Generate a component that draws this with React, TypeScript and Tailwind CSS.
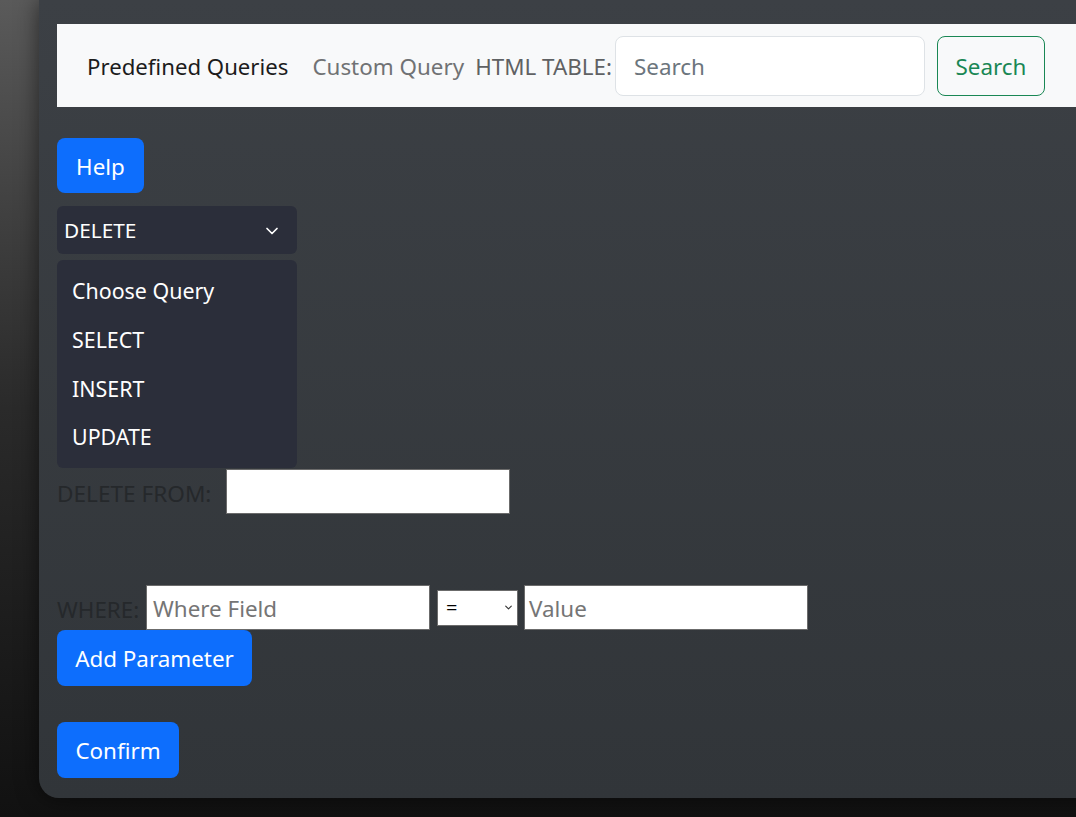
import React from "react";

const font = { fontFamily: '"Noto Sans", "Open Sans", sans-serif' };

function Chevron({ className, sw = 2 }: { className?: string; sw?: number }) {
  return (
    <svg viewBox="0 0 16 16" className={className} fill="none" stroke="currentColor" strokeWidth={sw} strokeLinecap="round" strokeLinejoin="round">
      <path d="M3 5.5l5 5 5-5" />
    </svg>
  );
}

export default function App() {
  return (
    <div
      className="w-[1076px] h-[817px] overflow-hidden bg-gradient-to-b from-[#5a5a5a] via-[#2a2a2a] to-[#111111]"
      style={font}
    >
      <div className="ml-[39px] w-[1100px] h-[798px] rounded-bl-[20px] bg-gradient-to-b from-[#3c4045] to-[#313539] shadow-[0_0_22px_rgba(0,0,0,0.55)] pl-[18px] pt-[24px]">
        {/* Navbar */}
        <div className="h-[83px] bg-[#f8f9fa] flex items-center pl-[30px]">
          <span className="text-[22.2px] text-[#1c1c1c] pt-[3px]">Predefined Queries</span>
          <span className="ml-[24px] text-[22.4px] text-[#707274] pt-[3px]">Custom Query</span>
          <span className="ml-[11px] text-[22.4px] text-[#5f6163] pt-[3px]">HTML TABLE:</span>
          <div className="ml-[3px] w-[310px] h-[60px] bg-white border border-[#dee2e6] rounded-[8px] flex items-center pl-[18px] pt-[3px] text-[22.4px] text-[#6c757d]">
            Search
          </div>
          <div className="ml-[12px] w-[108px] h-[60px] border border-[#198754] rounded-[8px] flex items-center justify-center pt-[3px] text-[22.4px] text-[#198754]">
            Search
          </div>
        </div>

        {/* Help */}
        <div className="mt-[31px] w-[87px] h-[55px] bg-[#0d6efd] rounded-[8px] flex items-center justify-center pt-[2px] text-[22.4px] text-white">
          Help
        </div>

        {/* Select */}
        <div className="relative mt-[13px] w-[240px]">
          <div className="h-[48px] bg-[#2b2e3a] rounded-[6px] flex items-center justify-between pl-[7px] pr-[17px] pt-[2px] text-[20.8px] text-white">
            <span>DELETE</span>
            <Chevron className="w-[16px] h-[16px] text-white" sw={1.7} />
          </div>
          <div className="absolute left-0 top-[54px] w-[240px] h-[208px] bg-[#2b2e3a] rounded-[6px] pt-[13px] pl-[15px] flex flex-col text-[21.4px] text-white z-10">
            <div className="h-[49px] leading-[36px]">Choose Query</div>
            <div className="h-[49px] leading-[36px]">SELECT</div>
            <div className="h-[49px] leading-[36px]">INSERT</div>
            <div className="h-[49px] leading-[36px]">UPDATE</div>
          </div>
        </div>

        {/* Delete From */}
        <div className="mt-[215px] flex items-center h-[44px]">
          <span className="text-[22.6px] text-[#25282b] w-[169px] pt-[6px]">DELETE FROM:</span>
          <div className="w-[284px] h-[45px] bg-white border border-[#6b6b6b]" />
        </div>

        {/* Where */}
        <div className="mt-[72px] flex items-center h-[45px]">
          <span className="text-[22.4px] text-[#25282b] w-[89px] pt-[4px]">WHERE:</span>
          <div className="w-[284px] h-[45px] bg-white border border-[#6b6b6b] flex items-center pl-[6px] pt-[3px] text-[22.4px] text-[#757575]">
            Where Field
          </div>
          <div className="ml-[7px] w-[81px] h-[36px] bg-white border border-[#6b6b6b] flex items-center justify-between pl-[8px] pr-[4px] text-[20px] text-black">
            <span>=</span>
            <Chevron className="w-[9px] h-[9px] text-[#333]" />
          </div>
          <div className="ml-[6px] w-[284px] h-[45px] bg-white border border-[#6b6b6b] flex items-center pl-[4px] pt-[3px] text-[22.4px] text-[#757575]">
            Value
          </div>
        </div>

        {/* Add Parameter */}
        <div className="w-[195px] h-[56px] bg-[#0d6efd] rounded-[8px] flex items-center justify-center pt-[2px] text-[22.4px] text-white">
          Add Parameter
        </div>

        {/* Confirm */}
        <div className="mt-[36px] w-[122px] h-[56px] bg-[#0d6efd] rounded-[8px] flex items-center justify-center pt-[2px] text-[22.4px] text-white">
          Confirm
        </div>
      </div>
    </div>
  );
}
